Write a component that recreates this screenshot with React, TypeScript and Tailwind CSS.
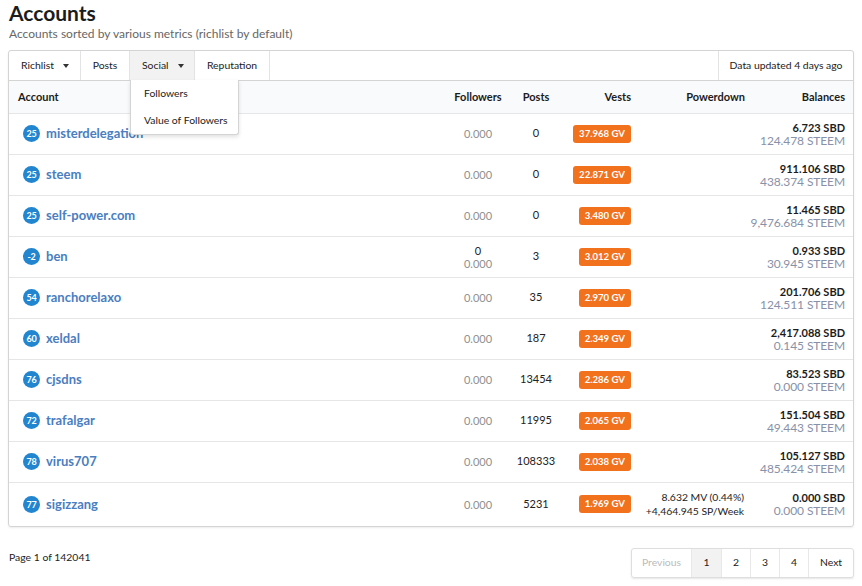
import React from "react";

type Row = {
  rep: string;
  name: string;
  followers: string;
  followersTop?: string;
  posts: string;
  vests: string;
  powerdown?: [string, string];
  sbd: string;
  steem: string;
};

const rows: Row[] = [
  { rep: "25", name: "misterdelegation", followers: "0.000", posts: "0", vests: "37.968 GV", sbd: "6.723 SBD", steem: "124.478 STEEM" },
  { rep: "25", name: "steem", followers: "0.000", posts: "0", vests: "22.871 GV", sbd: "911.106 SBD", steem: "438.374 STEEM" },
  { rep: "25", name: "self-power.com", followers: "0.000", posts: "0", vests: "3.480 GV", sbd: "11.465 SBD", steem: "9,476.684 STEEM" },
  { rep: "-2", name: "ben", followersTop: "0", followers: "0.000", posts: "3", vests: "3.012 GV", sbd: "0.933 SBD", steem: "30.945 STEEM" },
  { rep: "54", name: "ranchorelaxo", followers: "0.000", posts: "35", vests: "2.970 GV", sbd: "201.706 SBD", steem: "124.511 STEEM" },
  { rep: "60", name: "xeldal", followers: "0.000", posts: "187", vests: "2.349 GV", sbd: "2,417.088 SBD", steem: "0.145 STEEM" },
  { rep: "76", name: "cjsdns", followers: "0.000", posts: "13454", vests: "2.286 GV", sbd: "83.523 SBD", steem: "0.000 STEEM" },
  { rep: "72", name: "trafalgar", followers: "0.000", posts: "11995", vests: "2.065 GV", sbd: "151.504 SBD", steem: "49.443 STEEM" },
  { rep: "78", name: "virus707", followers: "0.000", posts: "108333", vests: "2.038 GV", sbd: "105.127 SBD", steem: "485.424 STEEM" },
  {
    rep: "77",
    name: "sigizzang",
    followers: "0.000",
    posts: "5231",
    vests: "1.969 GV",
    powerdown: ["8.632 MV (0.44%)", "+4,464.945 SP/Week"],
    sbd: "0.000 SBD",
    steem: "0.000 STEEM",
  },
];

function Caret() {
  return <span className="ml-[9px] inline-block h-0 w-0 border-x-[3px] border-t-[4px] border-x-transparent border-t-[#333] align-middle" />;
}

export default function App() {
  return (
    <div className="min-h-[586px] w-[862px] bg-white px-2 text-[10.4px] text-[#222]" style={{ fontFamily: "Lato, 'Open Sans', sans-serif" }}>
      {/* Title */}
      <div className="pl-[1px] pt-[1px]">
        <h1 className="text-[21px] font-bold leading-[24px] text-[#1b1c1d]">Accounts</h1>
        <div className="mt-[1px] text-[12px] leading-[15px] text-[#666]">Accounts sorted by various metrics (richlist by default)</div>
      </div>

      {/* Panel */}
      <div className="relative mt-[9px] rounded-[3px] border border-[#d4d4d5] shadow-[0_1px_2px_rgba(0,0,0,0.08)]">
        {/* Toolbar */}
        <div className="flex h-[30px] items-stretch border-b border-[#d4d4d5] text-[10.4px] text-[#222]">
          <div className="flex w-[72px] items-center border-r border-[#e3e3e3] pl-[12px]">
            Richlist <Caret />
          </div>
          <div className="flex w-[49px] items-center justify-center border-r border-[#e3e3e3]">Posts</div>
          <div className="flex w-[65px] items-center border-r border-[#e3e3e3] bg-[#f2f2f2] pl-[12px]">
            Social <Caret />
          </div>
          <div className="flex w-[75px] items-center justify-center border-r border-[#e3e3e3]">Reputation</div>
          <div className="flex-1" />
          <div className="flex w-[135px] items-center justify-center border-l border-[#e3e3e3]">Data updated 4 days ago</div>
        </div>

        {/* Dropdown */}
        <div className="absolute left-[121px] top-[29px] z-10 w-[109px] whitespace-nowrap rounded-b-[3px] border border-[#d4d4d5] border-t-0 bg-white shadow-[0_2px_4px_rgba(0,0,0,0.12)]">
          <div className="px-[13px] py-[7px] leading-[13px]">Followers</div>
          <div className="px-[13px] py-[7px] leading-[13px]">Value of Followers</div>
        </div>

        {/* Table */}
        <table className="w-full table-fixed border-collapse">
          <colgroup>
            <col className="w-[438px]" />
            <col className="w-[62px]" />
            <col className="w-[54px]" />
            <col className="w-[76px]" />
            <col className="w-[114px]" />
            <col />
          </colgroup>
          <thead>
            <tr className="h-[32px] bg-[#f9fafb] text-[11px] font-bold text-[#1b1c1d]">
              <th className="pl-[9px] text-left font-bold">Account</th>
              <th className="text-center font-bold">Followers</th>
              <th className="text-center font-bold">Posts</th>
              <th className="pr-[8px] text-right font-bold">Vests</th>
              <th className="pr-[8px] text-right font-bold">Powerdown</th>
              <th className="pr-[8px] text-right font-bold">Balances</th>
            </tr>
          </thead>
          <tbody>
            {rows.map((r) => (
              <tr key={r.name} className={`border-t border-[#e6e6e6] ${r.powerdown ? "h-[44px]" : "h-[41px]"}`}>
                <td className="pl-[14px]">
                  <div className="flex items-center gap-[6px]">
                    <span className="flex h-[17px] w-[17px] items-center justify-center rounded-full bg-[#2185d0] text-[9px] font-bold tracking-[-0.3px] text-white">
                      {r.rep}
                    </span>
                    <span className="text-[13px] font-bold text-[#4a7ebf]">{r.name}</span>
                  </div>
                </td>
                <td className="text-center text-[11px] leading-[13px]">
                  {r.followersTop && <div className="text-[#1b1c1d]">{r.followersTop}</div>}
                  <div className="text-[#8f8f8f]">{r.followers}</div>
                </td>
                <td className="text-center text-[11px]">{r.posts}</td>
                <td className="pr-[8px] text-right">
                  <span className="inline-block rounded-[3px] bg-[#f2711c] px-[6px] text-[9.6px] font-bold leading-[18px] text-white">
                    {r.vests}
                  </span>
                </td>
                <td className="pr-[9px] text-right leading-[14px]">
                  {r.powerdown && (
                    <>
                      <div>{r.powerdown[0]}</div>
                      <div>{r.powerdown[1]}</div>
                    </>
                  )}
                </td>
                <td className="pr-[8px]">
                  <div className="flex flex-col items-end whitespace-nowrap leading-[13px]">
                    <div className="text-[11px] font-bold text-[#1b1c1d]">{r.sbd}</div>
                    <div className="text-[12px] tracking-[-0.1px] text-[#8891a8]">{r.steem}</div>
                  </div>
                </td>
              </tr>
            ))}
          </tbody>
        </table>
      </div>

      {/* Footer */}
      <div className="mt-[21px] flex items-start justify-between">
        <div className="pl-[1px] pt-[2px]">Page 1 of 142041</div>
        <div className="flex h-[30px] overflow-hidden rounded-[3px] border border-[#dededf] shadow-[0_1px_2px_rgba(0,0,0,0.1)]">
          <div className="flex w-[60px] items-center justify-center border-r border-[#e8e8e8] text-[#bbb]">Previous</div>
          <div className="flex w-[30px] items-center justify-center border-r border-[#e8e8e8] bg-[#f2f2f2]">1</div>
          <div className="flex w-[29px] items-center justify-center border-r border-[#e8e8e8]">2</div>
          <div className="flex w-[29px] items-center justify-center border-r border-[#e8e8e8]">3</div>
          <div className="flex w-[29px] items-center justify-center border-r border-[#e8e8e8]">4</div>
          <div className="flex w-[44px] items-center justify-center">Next</div>
        </div>
      </div>
    </div>
  );
}
